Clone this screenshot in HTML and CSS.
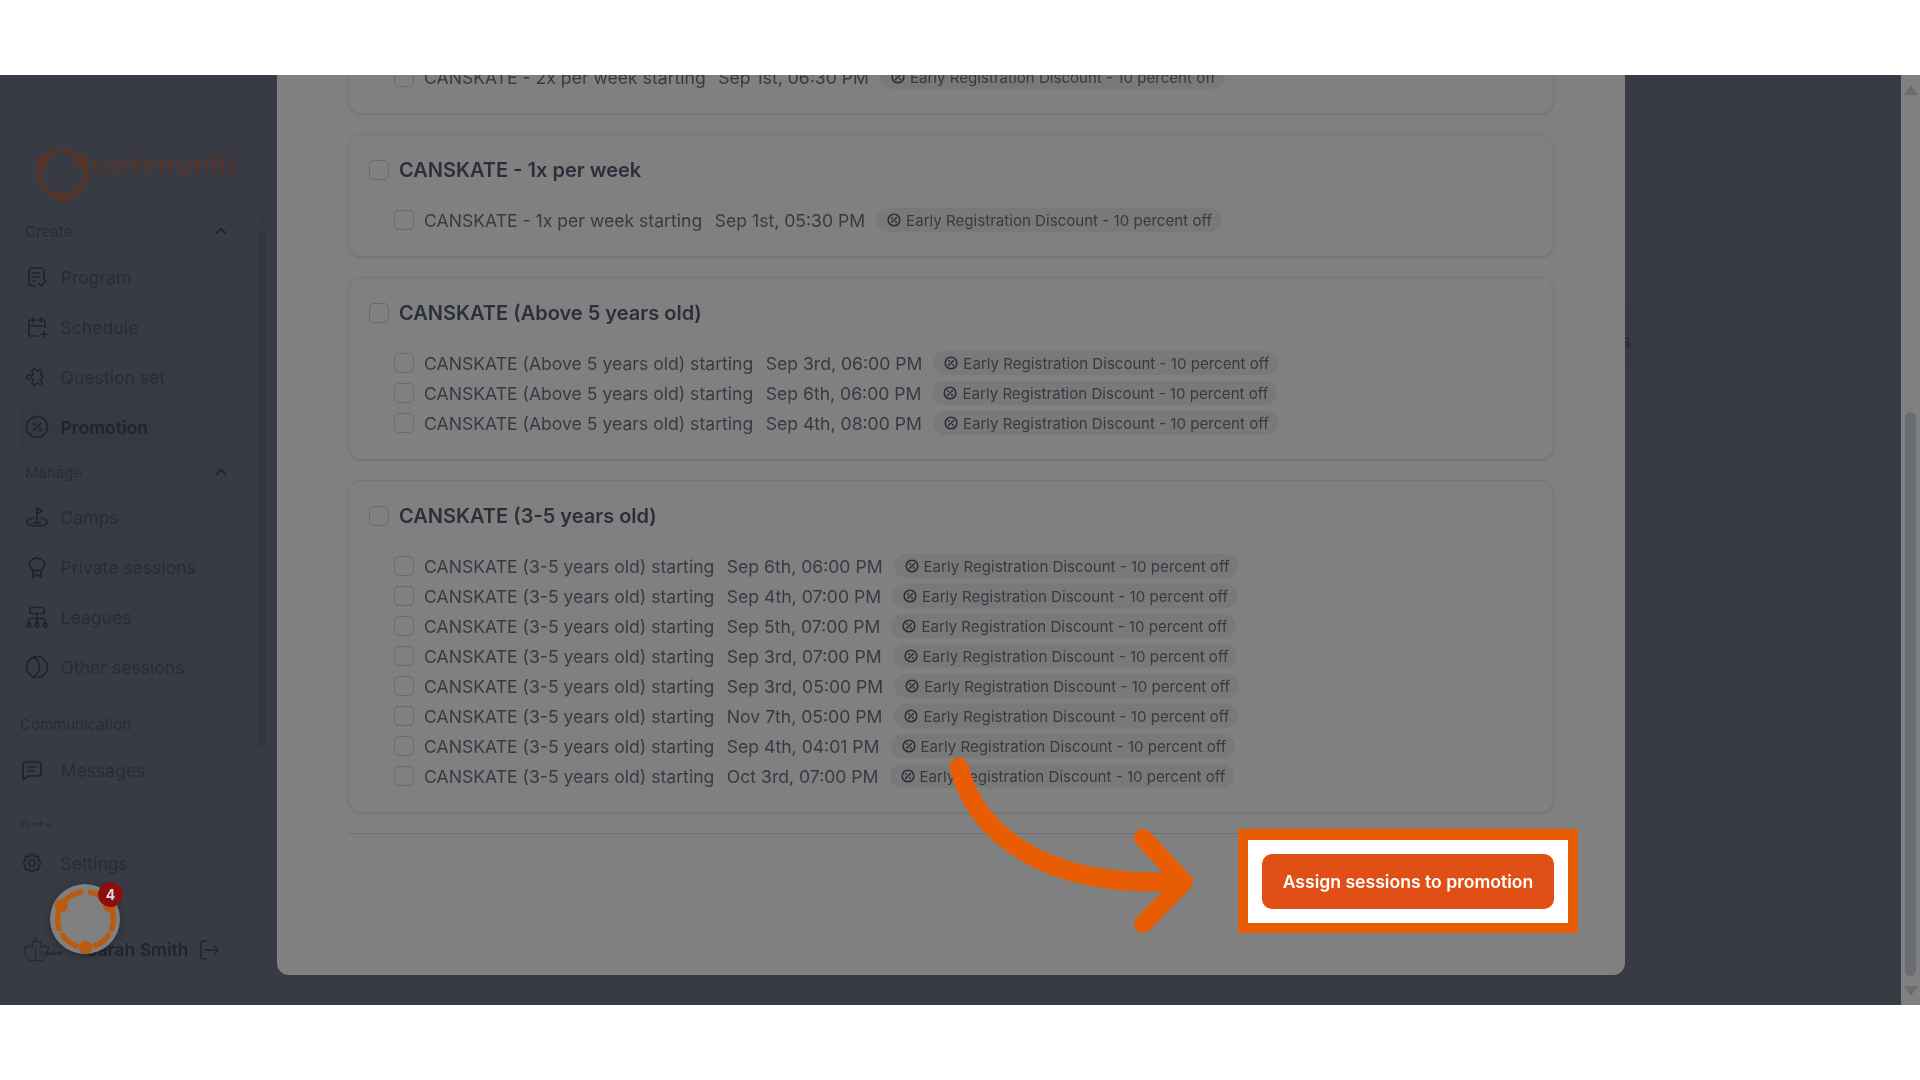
FILE: index.html
```html
<!DOCTYPE html>
<html lang="en">
<head>
<meta charset="utf-8">
<title>Assign sessions to promotion</title>
<link rel="stylesheet" href="styles.css">
</head>
<body>
<svg class="defs" width="0" height="0">
  <symbol id="ring" viewBox="-6 -6 112 112">
    <g fill="none" stroke="currentColor" stroke-width="8.500" stroke-linecap="round">
      <path d="M18.900 18.900A44 44 0 0 1 42.400 6.700"/><path d="M57.600 6.700A44 44 0 0 1 81.100 18.900"/>
      <path d="M92.500 38.600A44 44 0 0 1 91.300 65"/><path d="M86 75.200A44 44 0 0 1 65 91.300"/>
      <path d="M35 91.300A44 44 0 0 1 14 75.200"/><path d="M8.600 65A44 44 0 0 1 7.500 38.600"/>
    </g>
    <g fill="currentColor"><circle cx="11.900" cy="28" r="10.500"/><circle cx="88.100" cy="28" r="10.500"/><circle cx="50" cy="94" r="10.500"/></g>
  </symbol>
  <symbol id="disc" viewBox="0 0 24 24">
    <g fill="none" stroke="currentColor" stroke-width="2.600" stroke-linecap="round">
      <circle cx="12" cy="12" r="10"/><path d="M8 16 16 8"/><path d="M8.600 8.600h.01M15.400 15.400h.01" stroke-width="3.400"/>
    </g>
  </symbol>
</svg>

<div class="frame">
  <aside class="sidebar">
    <div class="brand">
      <svg class="brand-ring"><use href="#ring"/></svg>
      <span class="brand-name">communiti</span>
    </div>
    <div class="nav-scroll">
      <div class="nav-head"><span>Create</span><svg class="chev" viewBox="0 0 24 24"><path d="M6 15l6-6 6 6"/></svg></div>
      <a class="nav-item"><svg class="ico" viewBox="0 0 24 24"><path d="M10 21H7a3 3 0 0 1-3-3V6a3 3 0 0 1 3-3h9a3 3 0 0 1 3 3v9"/><path d="M8 8h7M8 12h6M8 16h2"/><path d="M14 19l2 2 5-5"/></svg>Program</a>
      <a class="nav-item"><svg class="ico" viewBox="0 0 24 24"><path d="M12.500 21H6a2 2 0 0 1-2-2V7a2 2 0 0 1 2-2h12a2 2 0 0 1 2 2v5"/><path d="M16 3v4M8 3v4M4 11h16M16 19h6M19 16v6"/></svg>Schedule</a>
      <a class="nav-item"><svg class="ico" viewBox="0 0 24 24"><g transform="rotate(45 12 12) translate(1.500 1.500) scale(.88)"><path d="M4 7h3a1 1 0 0 0 1-1V5a2 2 0 0 1 4 0v1a1 1 0 0 0 1 1h3a1 1 0 0 1 1 1v3a1 1 0 0 0 1 1h1a2 2 0 0 1 0 4h-1a1 1 0 0 0-1 1v3a1 1 0 0 1-1 1h-3a1 1 0 0 1-1-1v-1a2 2 0 0 0-4 0v1a1 1 0 0 1-1 1H4a1 1 0 0 1-1-1v-3a1 1 0 0 1 1-1h1a2 2 0 0 0 0-4H4a1 1 0 0 1-1-1V8a1 1 0 0 1 1-1"/></g></svg>Question set</a>
      <a class="nav-item active"><svg class="ico" viewBox="0 0 24 24"><circle cx="12" cy="12" r="10.500"/><path d="M8.500 15.500l7-7"/><path d="M9 9h.01M15 15h.01" stroke-width="3"/></svg>Promotion</a>
      <div class="nav-head second"><span>Manage</span><svg class="chev" viewBox="0 0 24 24"><path d="M6 15l6-6 6 6"/></svg></div>
      <a class="nav-item after-second"><svg class="ico" viewBox="0 0 24 24"><path d="M12 17V3l5 3-5 3"/><path d="M8 13c-3.200.6-6 2-6 4.300C2 19.500 6 21 12 21s10-1.500 10-3.700c0-2.300-2.800-3.700-6-4.300"/><path d="M8.500 17.500c1.500 1 5.500 1 7 0"/></svg>Camps</a>
      <a class="nav-item"><svg class="ico" viewBox="0 0 24 24"><path d="M12 2.500l2 1.300 2.400-.2 1.100 2.200 2 1.300-.4 2.400.4 2.300-2 1.300-1.100 2.200-2.400-.2-2 1.300-2-1.300-2.400.2-1.100-2.200-2-1.300.4-2.300-.4-2.400 2-1.300 1.100-2.200 2.400.2z"/><path d="M8 15.500V22l4-2.500 4 2.500v-6.500"/></svg>Private sessions</a>
      <a class="nav-item"><svg class="ico" viewBox="0 0 24 24"><rect x="5" y="2.500" width="14" height="6" rx="2"/><path d="M12 8.500V18M4 18v-2.500a2 2 0 0 1 2-2h12a2 2 0 0 1 2 2V18"/><circle cx="3.800" cy="20" r="1.900"/><circle cx="12" cy="20" r="1.900"/><circle cx="20.200" cy="20" r="1.900"/></svg>Leagues</a>
      <a class="nav-item"><svg class="ico" viewBox="0 0 24 24"><circle cx="12" cy="12" r="10.500"/><path d="M9 2.500c4 2.500 5.500 5.500 5.500 9.500S13 19 9 21.500"/></svg>Other sessions</a>
      <div class="nav-head plain"><span>Communication</span></div>
      <a class="nav-item msg"><svg class="ico" viewBox="0 0 24 24"><path d="M8 9h8M8 13h6"/><path d="M3 22V7a3 3 0 0 1 3-3h12a3 3 0 0 1 3 3v8a3 3 0 0 1-3 3H8z"/></svg>Messages</a>
      <div class="nav-head plain data"><span>Data</span></div>
      <div class="nav-track"><i class="tri up"></i><b class="thumb"></b><i class="tri down"></i></div>
    </div>
    <a class="nav-item settings"><svg class="ico" viewBox="0 0 24 24"><path d="M10.325 4.317c.426-1.756 2.924-1.756 3.350 0a1.724 1.724 0 0 0 2.573 1.066c1.543-.94 3.310.826 2.370 2.370a1.724 1.724 0 0 0 1.065 2.572c1.756.426 1.756 2.924 0 3.350a1.724 1.724 0 0 0-1.066 2.573c.94 1.543-.826 3.310-2.370 2.370a1.724 1.724 0 0 0-2.572 1.065c-.426 1.756-2.924 1.756-3.350 0a1.724 1.724 0 0 0-2.573-1.066c-1.543.94-3.310-.826-2.370-2.370a1.724 1.724 0 0 0-1.065-2.572c-1.756-.426-1.756-2.924 0-3.350a1.724 1.724 0 0 0 1.066-2.573c-.94-1.543.826-3.310 2.370-2.370 1 .608 2.296.07 2.572-1.065z"/><circle cx="12" cy="12" r="3"/></svg>Settings</a>
    <div class="user">
      <span class="club"><svg class="leaf" viewBox="0 0 30 30"><path d="M15 1l3 6 3-1-1 7 5-3 1 3 4-1-2 6 2 2-7 5 1 3-7-1-1 0-1 0-7 1 1-3-7-5 2-2-2-6 4 1 1-3 5 3-1-7 3 1zM15 12v18"/></svg><em>Lakefield</em></span>
      <span class="user-name">Sarah Smith</span>
      <svg class="logout" viewBox="0 0 24 24"><path d="M9 2.500H5a2 2 0 0 0-2 2v15a2 2 0 0 0 2 2h4"/><path d="M8 12h14M17 7l5 5-5 5"/></svg>
    </div>
  </aside>

  <main class="main">
    <div class="main-rule"></div>
    <div class="main-card"><div class="main-card-head">Sessions</div></div>
  </main>
  <div class="page-scroll"><i class="tri up"></i><b class="thumb"></b><i class="tri down"></i></div>

  <section class="modal">
    <div class="modal-list">
      <div class="card">
        <div class="group"><span class="check"></span><h3>CANSKATE - 2x per week</h3></div>
        <div class="rows">
          <div class="row"><span class="check"></span><span>CANSKATE - 2x per week starting</span><span>Sep 1st, 06:30 PM</span><span class="pill"><svg><use href="#disc"/></svg>Early Registration Discount - 10 percent off</span></div>
        </div>
      </div>
      <div class="card">
        <div class="group"><span class="check"></span><h3>CANSKATE - 1x per week</h3></div>
        <div class="rows">
          <div class="row"><span class="check"></span><span>CANSKATE - 1x per week starting</span><span>Sep 1st, 05:30 PM</span><span class="pill"><svg><use href="#disc"/></svg>Early Registration Discount - 10 percent off</span></div>
        </div>
      </div>
      <div class="card">
        <div class="group"><span class="check"></span><h3>CANSKATE (Above 5 years old)</h3></div>
        <div class="rows">
          <div class="row"><span class="check"></span><span>CANSKATE (Above 5 years old) starting</span><span>Sep 3rd, 06:00 PM</span><span class="pill"><svg><use href="#disc"/></svg>Early Registration Discount - 10 percent off</span></div>
          <div class="row"><span class="check"></span><span>CANSKATE (Above 5 years old) starting</span><span>Sep 6th, 06:00 PM</span><span class="pill"><svg><use href="#disc"/></svg>Early Registration Discount - 10 percent off</span></div>
          <div class="row"><span class="check"></span><span>CANSKATE (Above 5 years old) starting</span><span>Sep 4th, 08:00 PM</span><span class="pill"><svg><use href="#disc"/></svg>Early Registration Discount - 10 percent off</span></div>
        </div>
      </div>
      <div class="card">
        <div class="group"><span class="check"></span><h3>CANSKATE (3-5 years old)</h3></div>
        <div class="rows">
          <div class="row"><span class="check"></span><span>CANSKATE (3-5 years old) starting</span><span>Sep 6th, 06:00 PM</span><span class="pill"><svg><use href="#disc"/></svg>Early Registration Discount - 10 percent off</span></div>
          <div class="row"><span class="check"></span><span>CANSKATE (3-5 years old) starting</span><span>Sep 4th, 07:00 PM</span><span class="pill"><svg><use href="#disc"/></svg>Early Registration Discount - 10 percent off</span></div>
          <div class="row"><span class="check"></span><span>CANSKATE (3-5 years old) starting</span><span>Sep 5th, 07:00 PM</span><span class="pill"><svg><use href="#disc"/></svg>Early Registration Discount - 10 percent off</span></div>
          <div class="row"><span class="check"></span><span>CANSKATE (3-5 years old) starting</span><span>Sep 3rd, 07:00 PM</span><span class="pill"><svg><use href="#disc"/></svg>Early Registration Discount - 10 percent off</span></div>
          <div class="row"><span class="check"></span><span>CANSKATE (3-5 years old) starting</span><span>Sep 3rd, 05:00 PM</span><span class="pill"><svg><use href="#disc"/></svg>Early Registration Discount - 10 percent off</span></div>
          <div class="row"><span class="check"></span><span>CANSKATE (3-5 years old) starting</span><span>Nov 7th, 05:00 PM</span><span class="pill"><svg><use href="#disc"/></svg>Early Registration Discount - 10 percent off</span></div>
          <div class="row"><span class="check"></span><span>CANSKATE (3-5 years old) starting</span><span>Sep 4th, 04:01 PM</span><span class="pill"><svg><use href="#disc"/></svg>Early Registration Discount - 10 percent off</span></div>
          <div class="row"><span class="check"></span><span>CANSKATE (3-5 years old) starting</span><span>Oct 3rd, 07:00 PM</span><span class="pill"><svg><use href="#disc"/></svg>Early Registration Discount - 10 percent off</span></div>
        </div>
      </div>
    </div>
    <div class="modal-foot">
      <div class="spot"><button class="assign">Assign sessions to promotion</button></div>
    </div>
  </section>

  <svg class="pointer" viewBox="0 0 260 190">
    <path class="shaft" d="M21 24C37 87 102 147 244 138"/>
    <path class="head" d="M205 95l41 44-41 42"/>
  </svg>

  <div class="bubble">
    <svg><use href="#ring"/></svg>
    <span class="badge">4</span>
  </div>
</div>
</body>
</html>
```
FILE: styles.css
```css
* { box-sizing: border-box; }
html, body { margin: 0; height: 100%; background: #fff; overflow: hidden; }
body { padding-top: 75px; font-family: Inter, "Liberation Sans", sans-serif; }
.defs { position: absolute; }

.frame {
  position: relative;
  display: flex;
  height: 930px;
  background: #383b43;
  overflow: hidden;
  filter: blur(.35px);
}

/* sidebar */
.sidebar {
  width: 277px;
  flex: none;
  display: flex;
  flex-direction: column;
  color: #282c36;
}
.brand {
  display: flex;
  align-items: flex-start;
  height: 131px;
  padding: 69px 0 0 33px;
  color: #5a3325;
}
.brand-ring { width: 59px; height: 59px; flex: none; }
.brand-name {
  margin: -5px 0 0 -1px;
  font: 400 28px/48px "Open Sans", sans-serif;
  letter-spacing: .5px;
  color: #5a3325;
}
.nav-scroll {
  position: relative;
  flex: none;
  height: 621px;
  padding: 13px 0 0 20px;
  overflow: hidden;
}
.nav-head {
  display: flex;
  align-items: center;
  justify-content: space-between;
  width: 210px;
  height: 24px;
  padding: 0 0 0 5px;
  font-size: 15px;
  color: #282c36;
}
.nav-head.second { margin-top: 10px; }
.nav-head.plain { padding-left: 0; margin-top: 20px; }
.nav-head.data { margin-top: 19px; }
.chev { width: 18px; height: 18px; fill: none; stroke: #20242d; stroke-width: 2.600; stroke-linecap: round; stroke-linejoin: round; }
.nav-item {
  display: flex;
  align-items: center;
  gap: 11.500px;
  width: 225px;
  height: 50px;
  padding-left: 5px;
  font-size: 17.600px;
  color: #282c36;
}
.nav-scroll > .nav-head + .nav-item { margin-top: 9px; }
.nav-scroll > .nav-head + .nav-item.after-second { margin-top: 8px; }
.nav-item.active { font-weight: 600; color: #20242d; background: #363941; border-radius: 8px; height: 46px; margin: 2px 0; }
.nav-item.msg { padding-left: 0; gap: 16.500px; }
.ico {
  width: 24px;
  height: 24px;
  flex: none;
  fill: none;
  stroke: #20242d;
  stroke-width: 1.700;
  stroke-linecap: round;
  stroke-linejoin: round;
}
.nav-track {
  position: absolute;
  top: 13px;
  right: 11px;
  width: 7px;
  height: 606px;
  display: flex;
  flex-direction: column;
  align-items: center;
}
.nav-track .thumb { display: block; width: 7px; height: 515px; margin-top: 6px; flex: none; background: #32353d; border-radius: 3px; }
.nav-track .tri.up { border-bottom-color: #34373f; }
.nav-track .tri.down { position: absolute; top: 595px; border-top-color: #34373f; }
.tri { display: block; width: 0; height: 0; flex: none; border: 4px solid transparent; }
.tri.up { border-top: 0; border-bottom: 6px solid #6a6d72; }
.tri.down { border-bottom: 0; border-top: 6px solid #6a6d72; }
.nav-item.settings { margin: 11px 0 0 20px; width: 240px; padding-left: 0; gap: 16.500px; }
.user {
  display: flex;
  align-items: center;
  height: 83px;
  margin: 5px 9px 0 20px;
  padding: 29px 0 0 2px;
  border-top: 1px solid #34373f;
}
.club { display: flex; align-items: center; width: 64px; flex: none; color: #20242c; }
.leaf { width: 27px; height: 27px; fill: none; stroke: #20242c; stroke-width: 1; flex: none; }
.club em { margin: 7px 0 0 -10px; font: italic 700 6px "Liberation Serif", serif; }
.user-name { font-size: 17.600px; font-weight: 600; color: #20242d; white-space: nowrap; }
.logout { width: 22px; height: 22px; flex: none; margin-left: 9px; fill: none; stroke: #20242d; stroke-width: 1.500; stroke-linecap: round; stroke-linejoin: round; }

/* page behind the dialog */
.main { flex: 1; padding: 210px 22px 0 0; }
.main-rule { height: 1px; background: #34373f; }
.main-card { height: 139px; margin-top: 21px; border: 1px solid #34373f; border-radius: 12px; overflow: hidden; }
.main-card-head {
  width: 1378px;
  height: 66px;
  padding-right: 24px;
  background: #373a42;
  border-right: 1px solid #34373f;
  font-size: 18px;
  font-weight: 600;
  line-height: 66px;
  text-align: right;
  color: #272b35;
}
.page-scroll {
  width: 19px;
  flex: none;
  display: flex;
  flex-direction: column;
  align-items: center;
  padding-top: 10px;
  background: #808080;
}
.page-scroll .tri { border-left-width: 7px; border-right-width: 7px; }
.page-scroll .tri.up { border-bottom-width: 10px; }
.page-scroll .tri.down { border-top-width: 10px; margin-top: 10px; }
.page-scroll .thumb { display: block; width: 11px; height: 564px; margin-top: 317px; flex: none; background: #6a6e74; border-radius: 6px; }

/* dialog */
.modal {
  position: absolute;
  top: 0;
  left: 277px;
  width: 1348px;
  height: 900px;
  display: flex;
  flex-direction: column;
  background: #808080;
  border-radius: 0 0 12px 12px;
}
.modal-list {
  flex: 1;
  min-height: 0;
  display: flex;
  flex-direction: column;
  justify-content: flex-end;
  gap: 20px;
  padding: 0 71px 20px;
  overflow: hidden;
}
.card {
  flex: none;
  padding: 20px 20px 21px;
  border: 1px solid #767676;
  border-radius: 14px;
  box-shadow: 0 1px 2px rgba(0, 0, 0, .12);
}
.group { display: flex; align-items: center; gap: 10px; height: 30px; }
.group h3 { margin: 0; font-size: 20px; font-weight: 600; color: #2b2f3a; }
.rows { margin: 20px 0 0 25px; }
.row { display: flex; align-items: center; height: 30px; font-size: 17.600px; color: #363a43; }
.row .check { margin-right: 10px; }
.row span:nth-child(2) { margin-right: 12.500px; }
.check { width: 20px; height: 20px; flex: none; border: 1px solid #6b6b6b; border-radius: 5px; }
.pill {
  display: flex;
  align-items: center;
  gap: 5px;
  height: 24px;
  margin-left: 11px;
  padding: 0 9px 0 11px;
  border-radius: 12px;
  background: #797979;
  font-size: 15.100px;
  color: #363a43;
}
.pill svg { width: 14px; height: 14px; flex: none; color: #2b2f3a; }
.modal-foot {
  position: relative;
  display: flex;
  justify-content: flex-end;
  height: 142px;
  padding: 21px 71px 0 0;
}
.modal-foot::before {
  content: "";
  position: absolute;
  top: 0;
  left: 71px;
  right: 71px;
  height: 1px;
  background: #717171;
}
.spot { position: relative; height: 55px; }
.spot::before {
  content: "";
  position: absolute;
  inset: -25px -24px -24px -24px;
  background: #fff;
  border: solid #e85d04;
  border-width: 11px 10px 10px 10px;
}
.assign {
  position: relative;
  width: 292px;
  height: 55px;
  border: 0;
  border-radius: 10px;
  background: #e05016;
  color: #fff;
  font: 600 17.600px Inter, sans-serif;
}

/* annotation + launcher */
.pointer {
  position: absolute;
  top: 668px;
  left: 938px;
  width: 260px;
  height: 190px;
  fill: none;
  stroke: #e85d04;
  stroke-linecap: round;
  stroke-linejoin: round;
}
.shaft { stroke-width: 19; }
.head { stroke-width: 18; }
.bubble {
  position: absolute;
  top: 809px;
  left: 50px;
  width: 70px;
  height: 70px;
  display: flex;
  align-items: center;
  justify-content: center;
  border-radius: 50%;
  background: #808080;
  color: #b85a10;
  box-shadow: 0 2px 8px rgba(0, 0, 0, .3);
}
.bubble svg { width: 71px; height: 71px; flex: none; }
.badge {
  position: absolute;
  top: -2px;
  right: -3px;
  width: 25px;
  height: 25px;
  border-radius: 50%;
  background: #8b0f0f;
  color: #ddd;
  font-size: 14px;
  font-weight: 700;
  line-height: 25px;
  text-align: center;
}
```
